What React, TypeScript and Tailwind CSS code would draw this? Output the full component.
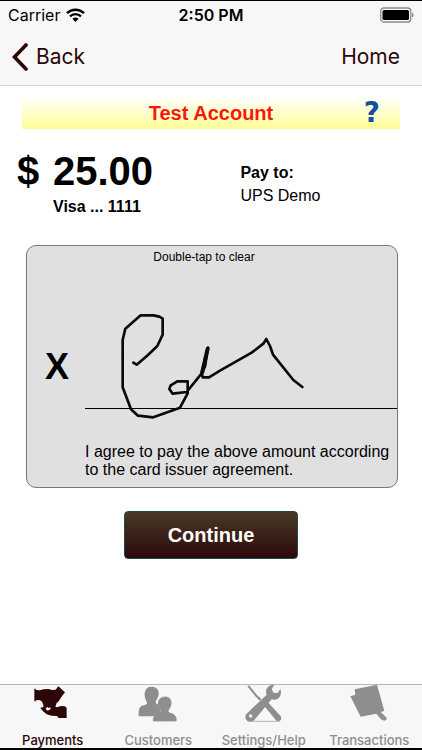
import { useState } from "react";
import type { ReactNode } from "react";

interface Tab {
  id: string;
  label: string;
  icon: ReactNode;
}

const TABS: Tab[] = [
  { id: "payments", label: "Payments", icon: <PaymentsIcon /> },
  { id: "customers", label: "Customers", icon: <CustomersIcon /> },
  { id: "settings", label: "Settings/Help", icon: <ToolsIcon /> },
  { id: "transactions", label: "Transactions", icon: <TransactionsIcon /> },
];

function PaymentsIcon() {
  return (
    <svg viewBox="8 6 120 120" className="size-10 overflow-visible" fill="currentColor" aria-hidden="true">
      <path d="M12 17L16 17 17 21 29 22 39 19 55 18 65 21 76 20 84 10 104 28 93 42 85 55 79 60 76 69 68 76 58 74 49 77 42 71 38 62 34 55 27 51 17 52 16 55 12 55Z" />
      <path d="M38 65L43 65 48 74 44 79 34 79 30 74 40 72Z" />
      <path d="M31 75L40 78 45 76 50 80 60 78 58 73 69 67 79 73 93 69 104 70 109 75 109 105 85 105 80 99 64 98 49 94 38 85Z" />
      <path d="M46 77L52 71 55 76 60 73 61 78 52 83Z" className="fill-[#f7f7f7]" />
    </svg>
  );
}

function CustomersIcon() {
  return (
    <svg viewBox="97 27 120 120" className="size-10 overflow-visible" fill="currentColor" aria-hidden="true">
      <path d="M137 32c14 0 22 7 22 20 0 7-2 12-5 17-3 5-5 9-3 13 2 3 8 4 14 6v33H100c-2 0-1-13 0-19 1-9 6-12 14-14 8-2 12-4 10-9-1-3-4-6-5-11-6-17 0-36 18-36z" />
      <path
        d="M178 62c-14 0-21 9-21 21 0 9 4 13 8 19 3 5-2 8-9 10-8 3-13 8-14 19 0 4 1 5 5 5h60c4 0 6-1 6-5-1-11-7-16-15-19-7-2-12-5-9-10 4-6 8-11 8-20 0-12-5-20-19-20z"
        className="stroke-[#a6a6a6]"
        strokeWidth="1"
      />
    </svg>
  );
}

function ToolsIcon() {
  return (
    <svg viewBox="98 27 120 120" className="size-10 overflow-visible" fill="currentColor" aria-hidden="true">
      <path d="M108 31l5-3 24 29 13 12-5 5-13-13z" />
      <path d="M157 88l14-8 36 39c8 9-3 22-13 14z" />
      <path d="M106 113l60-57c-5-12 0-22 9-27 5-3 9-3 14-2l-8 11 5 12 13 1 8-12c5 14 0 25-9 30-5 3-11 3-17 1l-52 62c-5 7-15 8-21 3-7-6-8-16-2-22z" />
      <circle cx="118" cy="120" r="5" className="fill-[#f7f7f7]" />
      <path d="M116 136h90" className="stroke-[#b5b5b5]" strokeWidth="3" />
    </svg>
  );
}

function TransactionsIcon() {
  return (
    <svg viewBox="100 27 120 120" className="size-10 overflow-visible" fill="currentColor" aria-hidden="true">
      <path d="M117 40L184 26 206 105 195 108 211 123C216 129 209 137 202 133L195 129 182 113 135 122 104 61 119 56Z" />
    </svg>
  );
}

function StatusBar() {
  return (
    <div className="grid h-7 grid-cols-3 items-center px-2 text-base leading-5 text-black">
      <div className="flex items-center gap-1.5">
        <span>Carrier</span>
        <svg viewBox="0 0 19 14" className="h-3.5 w-[19px] text-black" fill="none" aria-hidden="true">
          <path d="M1 5.2a12.2 12.2 0 0 1 17 0" stroke="currentColor" strokeWidth="2.4" />
          <path d="M4 8.4a8 8 0 0 1 11 0" stroke="currentColor" strokeWidth="2.3" />
          <path d="M6.4 10.8a4.6 4.6 0 0 1 6.2 0L9.5 14z" fill="currentColor" />
        </svg>
      </div>
      <span className="text-center font-semibold">2:50 PM</span>
      <svg viewBox="0 0 34 16" className="h-4 w-[34px] justify-self-end" fill="none" aria-hidden="true">
        <rect x="0.75" y="1" width="30" height="14" rx="3" stroke="#8a8a8a" strokeWidth="1.3" />
        <rect x="2.5" y="3" width="26.5" height="10" rx="1.5" fill="#000" />
        <path d="M32 5.5c2 .8 2 4.200 0 5z" fill="#8a8a8a" />
      </svg>
    </div>
  );
}

function NavBar() {
  return (
    <nav className="flex h-14 items-center justify-between pr-[22px] pl-3 text-[21px] leading-7 text-[#2b0708]">
      <button type="button" className="flex items-center gap-2">
        <svg viewBox="0 0 16 28" className="h-7 w-4" fill="none" aria-hidden="true">
          <path d="M14 2L2.500 14 14 26" stroke="currentColor" strokeWidth="3.600" strokeLinecap="round" />
        </svg>
        Back
      </button>
      <button type="button">Home</button>
    </nav>
  );
}

function SignaturePad() {
  const [signed, setSigned] = useState(true);

  return (
    <section
      className="mt-7 mr-6 ml-[26px] flex flex-col rounded-[10px] border border-[#777] bg-[#e0e0e0]"
      onDoubleClick={() => setSigned(false)}
    >
      <p className="mt-[3px] -ml-4 text-center text-xs leading-4">Double-tap to clear</p>
      <div className="mt-9 flex">
        <span className="flex w-[58px] shrink-0 items-center justify-end pt-6 pr-4 text-4xl leading-10 font-bold">
          X
        </span>
        <div className="h-[108px] grow border-b border-black">
          {signed && (
            <svg viewBox="195 183 648 324" className="h-[108px] w-[216px] overflow-visible" fill="none" role="img" aria-label="Signature">
              <path
                d="M340 368L350 374 384 345 412 318 428 284V236L418 230 400 226H362L316 266 308 300V442L333 508 354 527 400 532 480 503 503 460V424H472L452 436 448 447 458 461 500 456 545 400 564 323 555 380 545 396 548 412H567L600 392 695 338 730 311 739 297 750 318 759 344 820 420 847 441"
                stroke="#0a0a0a"
                strokeWidth="8"
                strokeLinejoin="round"
                strokeLinecap="round"
              />
              <path d="M563 326L547 396" stroke="#0a0a0a" strokeWidth="12" strokeLinecap="round" />
            </svg>
          )}
        </div>
      </div>
      <p className="mt-[34px] mb-2 ml-[58px] text-base leading-[18px]">
        I agree to pay the above amount according
        <br />
        to the card issuer agreement.
      </p>
    </section>
  );
}

function TabBar() {
  const [active, setActive] = useState("payments");

  return (
    <nav className="grid h-[66px] grid-cols-4 border-t border-b-2 border-t-[#b8b8b8] border-b-black bg-[#f7f7f7] font-['Inter',sans-serif]">
      {TABS.map((tab) => (
        <button
          key={tab.id}
          type="button"
          onClick={() => setActive(tab.id)}
          className={`flex flex-col items-center justify-between text-[13px] leading-4 font-medium ${
            tab.id === active ? "text-[#2b0708]" : "text-[#8e8e8e]"
          }`}
        >
          {tab.icon}
          {tab.label}
        </button>
      ))}
    </nav>
  );
}

export default function App() {
  return (
    <div className="flex min-h-screen flex-col bg-white font-['Liberation_Sans',Arial,sans-serif] text-black">
      <header className="border-t border-b border-t-black border-b-[#d4d4d4] bg-[#f7f7f7] font-['Inter',sans-serif]">
        <StatusBar />
        <NavBar />
      </header>

      <main className="flex grow flex-col">
        <div className="mx-[22px] mt-2.5 grid h-[33px] grid-cols-[1fr_auto_1fr] items-center bg-linear-to-b from-white to-[#fffc94]">
          <h1 className="col-start-2 text-xl leading-6 font-bold text-[#f51a0c]">Test Account</h1>
          <button
            type="button"
            className="mr-5 justify-self-end font-['DejaVu_Sans',sans-serif] text-[28px] leading-8 font-bold text-[#1450a0]"
            aria-label="Help"
          >
            ?
          </button>
        </div>

        <div className="mt-5 grid grid-cols-[4fr_3fr] pl-[17px]">
          <div className="grid grid-cols-[36px_1fr] font-bold">
            <span className="text-[40px] leading-[44px]">$</span>
            <span className="text-[40px] leading-[44px]">25.00</span>
            <span className="col-start-2 mt-1 text-base leading-5">Visa ... 1111</span>
          </div>
          <div className="-ml-2 pt-3 text-base leading-[23px]">
            <p className="font-bold">Pay to:</p>
            <p>UPS Demo</p>
          </div>
        </div>

        <SignaturePad />

        <button
          type="button"
          className="mt-[23px] h-12 w-[174px] self-center rounded border border-[#1d4a4e] bg-linear-to-b from-[#4a3826] to-[#2a0a0a] text-xl leading-6 font-bold text-white"
        >
          Continue
        </button>
      </main>

      <TabBar />
    </div>
  );
}
